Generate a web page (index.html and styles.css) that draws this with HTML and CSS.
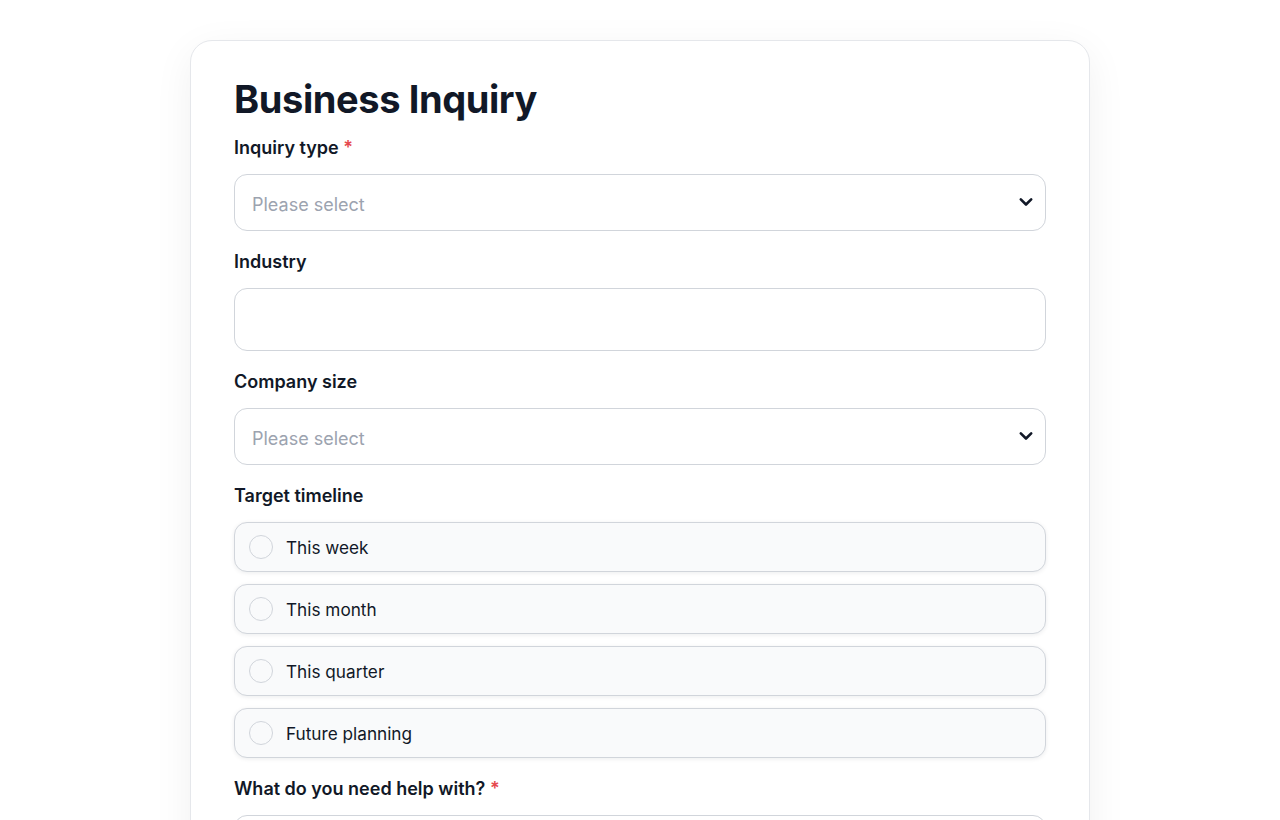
FILE: index.html
```html
<!DOCTYPE html>
<html lang="en">
  <head>
    <meta charset="UTF-8"/>
    <meta name="viewport" content="width=device-width, initial-scale=1.0"/>
    <title>Business Inquiry</title>
    <link rel="stylesheet" href="styles.css">
  </head>
  <body>
    <div class="page">
      <form class="card">
        <h1 class="title">Business Inquiry</h1>

        <div class="field">
          <label class="label">Inquiry type <span class="req">*</span></label>
          <div class="select">
            <span class="placeholder">Please select</span>
            <svg class="chevron" width="16" height="16" viewBox="0 0 16 16"><path d="M2.8 5.3l5.2 5.2 5.2-5.2" fill="none" stroke="#111827" stroke-width="2.6" stroke-linecap="round" stroke-linejoin="round"/></svg>
          </div>
        </div>

        <div class="field">
          <label class="label">Industry</label>
          <input class="input" type="text"/>
        </div>

        <div class="field">
          <label class="label">Company size</label>
          <div class="select">
            <span class="placeholder">Please select</span>
            <svg class="chevron" width="16" height="16" viewBox="0 0 16 16"><path d="M2.8 5.3l5.2 5.2 5.2-5.2" fill="none" stroke="#111827" stroke-width="2.6" stroke-linecap="round" stroke-linejoin="round"/></svg>
          </div>
        </div>

        <div class="field">
          <label class="label">Target timeline</label>
          <div class="options">
            <label class="option"><span class="radio"></span>This week</label>
            <label class="option"><span class="radio"></span>This month</label>
            <label class="option"><span class="radio"></span>This quarter</label>
            <label class="option"><span class="radio"></span>Future planning</label>
          </div>
        </div>

        <div class="field">
          <label class="label">What do you need help with? <span class="req">*</span></label>
          <textarea class="input area"></textarea>
        </div>
      </form>
    </div>
  </body>
</html>
```

FILE: styles.css
```css
body {
  margin: 0;
  background: #ffffff;
  font-family: "Inter", "Noto Sans", sans-serif;
  color: #111827;
}

.page {
  display: flex;
  justify-content: center;
  padding-top: 40px;
}

.card {
  width: 900px;
  box-sizing: border-box;
  padding: 30px 43px 40px 43px;
  border: 1px solid #e5e7eb;
  border-radius: 22px;
  background: #ffffff;
  box-shadow: 0 10px 40px rgba(17, 24, 39, 0.06);
}

.title {
  margin: 0 0 9px 0;
  font-size: 38px;
  line-height: 56px;
  font-weight: 700;
  letter-spacing: -0.4px;
  color: #111827;
}

.field {
  display: flex;
  flex-direction: column;
  margin-bottom: 19px;
}

.label {
  font-size: 18px;
  line-height: 24px;
  font-weight: 600;
  margin-bottom: 14px;
  color: #111827;
}

.req {
  color: #e5484d;
}

.select {
  height: 57px;
  box-sizing: border-box;
  border: 1px solid #d1d5db;
  border-radius: 13px;
  display: flex;
  align-items: center;
  justify-content: space-between;
  padding: 4px 11px 0 17px;
}

.placeholder {
  font-size: 18px;
  color: #9ca3af;
}

.chevron {
  margin-top: -5px;
}

.input {
  height: 63px;
  box-sizing: border-box;
  border: 1px solid #d1d5db;
  border-radius: 13px;
  font: inherit;
  padding: 0 17px;
  outline: none;
}

.area {
  height: 120px;
  resize: none;
}

.options {
  display: flex;
  flex-direction: column;
  gap: 12px;
}

.option {
  height: 50px;
  box-sizing: border-box;
  border: 1px solid #d1d5db;
  border-radius: 13px;
  background: #f9fafb;
  box-shadow: 0 1px 4px rgba(17, 24, 39, 0.08);
  display: flex;
  align-items: center;
  padding-left: 14px;
  font-size: 17.2px;
  color: #111827;
}

.radio {
  width: 22px;
  height: 22px;
  border: 1px solid #d1d5db;
  border-radius: 50%;
  background: #f9fafb;
  margin-right: 13px;
}
```
